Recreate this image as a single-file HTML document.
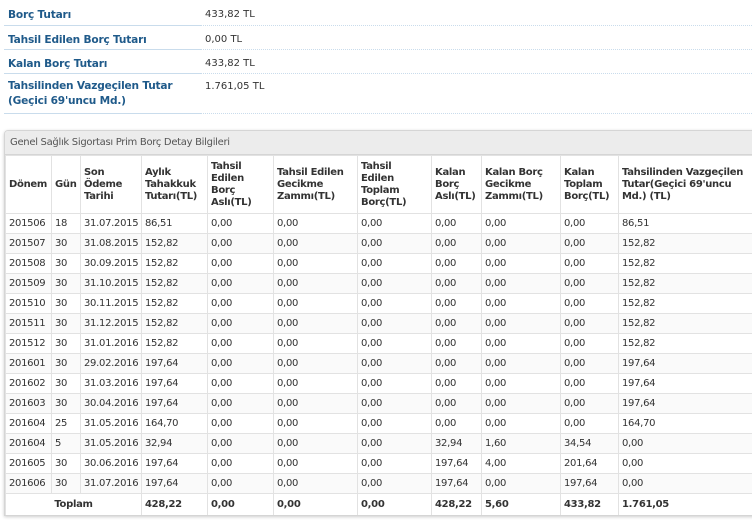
<!DOCTYPE html>
<html><head><meta charset="utf-8"><style>
*{margin:0;padding:0;box-sizing:border-box}
body{width:752px;height:524px;overflow:hidden;background:#fff;font-family:"DejaVu Sans","Liberation Sans",sans-serif;font-size:10px;color:#333;position:relative}
.info{position:absolute;left:4px;top:0;width:748px}
.ir{display:flex}
.ir .l{width:196px;border-bottom:1px solid #c9dcec;color:#1f5a8a;font-weight:bold;padding:8px 4px 0 4px;letter-spacing:-0.2px;font-size:10.6px}
.ir .v{flex:1;border-bottom:1px dotted #c9dcec;padding:8px 5px 0 5px;margin-left:0}
.panel{position:absolute;left:4px;top:130px;width:760px;height:386px;border:1px solid #d5d5d5;border-radius:4px 0 0 0;box-shadow:0 1px 3px rgba(0,0,0,.2);overflow:hidden}
.ph{height:24px;background:#ececec;border-bottom:1px solid #d5d5d5;padding:6px 5px;color:#555;letter-spacing:-0.3px}
table{border-collapse:collapse;table-layout:fixed;width:760px}
td,th{border:1px solid #e2e2e2;padding:0 3px;text-align:left;vertical-align:middle;white-space:nowrap;overflow:hidden;letter-spacing:-0.3px}
th{font-weight:bold;height:58px;line-height:12px}
td{height:20px}
tr.t td{font-weight:bold;height:22px}
tbody tr:nth-child(even) td{background:#fafafa}
</style></head><body>
<div class="info">
<div class="ir" style="height:26px"><div class="l" style="padding-top:9px">Borç Tutarı</div><div class="v" style="padding-top:9px">433,82 TL</div></div>
<div class="ir" style="height:24px"><div class="l">Tahsil Edilen Borç Tutarı</div><div class="v">0,00 TL</div></div>
<div class="ir" style="height:24px"><div class="l">Kalan Borç Tutarı</div><div class="v">433,82 TL</div></div>
<div class="ir" style="height:40px"><div class="l" style="line-height:15px;padding-top:5px">Tahsilinden Vazgeçilen Tutar<br>(Geçici 69'uncu Md.)</div><div class="v" style="padding-top:7px">1.761,05 TL</div></div>
</div>
<div class="panel">
<div class="ph">Genel Sağlık Sigortası Prim Borç Detay Bilgileri</div>
<table>
<colgroup><col style="width:46px"><col style="width:29px"><col style="width:61px"><col style="width:66px"><col style="width:66px"><col style="width:84px"><col style="width:74px"><col style="width:50px"><col style="width:79px"><col style="width:58px"><col style="width:147px"></colgroup>
<thead><tr><th>Dönem</th><th>Gün</th><th>Son<br>Ödeme<br>Tarihi</th><th>Aylık<br>Tahakkuk<br>Tutarı(TL)</th><th>Tahsil<br>Edilen<br>Borç<br>Aslı(TL)</th><th>Tahsil Edilen<br>Gecikme<br>Zammı(TL)</th><th>Tahsil<br>Edilen<br>Toplam<br>Borç(TL)</th><th>Kalan<br>Borç<br>Aslı(TL)</th><th>Kalan Borç<br>Gecikme<br>Zammı(TL)</th><th>Kalan<br>Toplam<br>Borç(TL)</th><th>Tahsilinden Vazgeçilen<br>Tutar(Geçici 69'uncu<br>Md.) (TL)</th></tr></thead>
<tbody>
<tr><td>201506</td><td>18</td><td>31.07.2015</td><td>86,51</td><td>0,00</td><td>0,00</td><td>0,00</td><td>0,00</td><td>0,00</td><td>0,00</td><td>86,51</td></tr>
<tr><td>201507</td><td>30</td><td>31.08.2015</td><td>152,82</td><td>0,00</td><td>0,00</td><td>0,00</td><td>0,00</td><td>0,00</td><td>0,00</td><td>152,82</td></tr>
<tr><td>201508</td><td>30</td><td>30.09.2015</td><td>152,82</td><td>0,00</td><td>0,00</td><td>0,00</td><td>0,00</td><td>0,00</td><td>0,00</td><td>152,82</td></tr>
<tr><td>201509</td><td>30</td><td>31.10.2015</td><td>152,82</td><td>0,00</td><td>0,00</td><td>0,00</td><td>0,00</td><td>0,00</td><td>0,00</td><td>152,82</td></tr>
<tr><td>201510</td><td>30</td><td>30.11.2015</td><td>152,82</td><td>0,00</td><td>0,00</td><td>0,00</td><td>0,00</td><td>0,00</td><td>0,00</td><td>152,82</td></tr>
<tr><td>201511</td><td>30</td><td>31.12.2015</td><td>152,82</td><td>0,00</td><td>0,00</td><td>0,00</td><td>0,00</td><td>0,00</td><td>0,00</td><td>152,82</td></tr>
<tr><td>201512</td><td>30</td><td>31.01.2016</td><td>152,82</td><td>0,00</td><td>0,00</td><td>0,00</td><td>0,00</td><td>0,00</td><td>0,00</td><td>152,82</td></tr>
<tr><td>201601</td><td>30</td><td>29.02.2016</td><td>197,64</td><td>0,00</td><td>0,00</td><td>0,00</td><td>0,00</td><td>0,00</td><td>0,00</td><td>197,64</td></tr>
<tr><td>201602</td><td>30</td><td>31.03.2016</td><td>197,64</td><td>0,00</td><td>0,00</td><td>0,00</td><td>0,00</td><td>0,00</td><td>0,00</td><td>197,64</td></tr>
<tr><td>201603</td><td>30</td><td>30.04.2016</td><td>197,64</td><td>0,00</td><td>0,00</td><td>0,00</td><td>0,00</td><td>0,00</td><td>0,00</td><td>197,64</td></tr>
<tr><td>201604</td><td>25</td><td>31.05.2016</td><td>164,70</td><td>0,00</td><td>0,00</td><td>0,00</td><td>0,00</td><td>0,00</td><td>0,00</td><td>164,70</td></tr>
<tr><td>201604</td><td>5</td><td>31.05.2016</td><td>32,94</td><td>0,00</td><td>0,00</td><td>0,00</td><td>32,94</td><td>1,60</td><td>34,54</td><td>0,00</td></tr>
<tr><td>201605</td><td>30</td><td>30.06.2016</td><td>197,64</td><td>0,00</td><td>0,00</td><td>0,00</td><td>197,64</td><td>4,00</td><td>201,64</td><td>0,00</td></tr>
<tr><td>201606</td><td>30</td><td>31.07.2016</td><td>197,64</td><td>0,00</td><td>0,00</td><td>0,00</td><td>197,64</td><td>0,00</td><td>197,64</td><td>0,00</td></tr>
<tr class="t"><td colspan="3" style="text-align:center">Toplam</td><td>428,22</td><td>0,00</td><td>0,00</td><td>0,00</td><td>428,22</td><td>5,60</td><td>433,82</td><td>1.761,05</td></tr>
</tbody></table>
</div>
</body></html>
